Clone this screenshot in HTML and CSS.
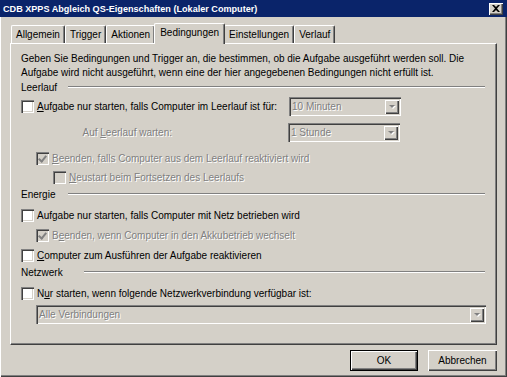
FILE: index.html
```html
<!DOCTYPE html>
<html lang="de">
<head>
  <meta charset="UTF-8">
  <title>CDB XPPS Abgleich QS-Eigenschaften</title>
  <link rel="stylesheet" href="styles.css">
</head>
<body>
  <div class="window">
    <div class="titlebar">
      <span class="title">CDB XPPS Abgleich QS-Eigenschaften (Lokaler Computer)</span>
      <span class="close">
        <svg width="8" height="7" viewBox="0 0 8 7"><path d="M0 0h2l2 2 2-2h2L5 3.5 8 7H6L4 5 2 7H0l3-3.5z" fill="#000"/></svg>
      </span>
    </div>

    <div class="content">
      <div class="tabs">
        <div class="tab">Allgemein</div>
        <div class="tab">Trigger</div>
        <div class="tab">Aktionen</div>
        <div class="tab active">Bedingungen</div>
        <div class="tab">Einstellungen</div>
        <div class="tab">Verlauf</div>
      </div>

      <div class="panel">
        <p class="desc">Geben Sie Bedingungen und Trigger an, die bestimmen, ob die Aufgabe ausgeführt werden soll. Die Aufgabe wird nicht ausgeführt, wenn eine der hier angegebenen Bedingungen nicht erfüllt ist.</p>

        <div class="group g-idle"><span class="group-label">Leerlauf</span><span class="etch"></span></div>

        <div class="row r-idle">
          <span class="check"></span>
          <span class="label wide"><u>A</u>ufgabe nur starten, falls Computer im Leerlauf ist für:</span>
          <span class="combo small"><span class="combo-text">10 Minuten</span><span class="drop"><i class="arrow"></i></span></span>
        </div>

        <div class="row r-wait">
          <span class="label right disabled">Auf <u>L</u>eerlauf warten:</span>
          <span class="combo small"><span class="combo-text">1 Stunde</span><span class="drop"><i class="arrow"></i></span></span>
        </div>

        <div class="row r-stop indent1">
          <span class="check checked off"></span>
          <span class="label disabled"><u>B</u>eenden, falls Computer aus dem Leerlauf reaktiviert wird</span>
        </div>

        <div class="row r-restart indent2">
          <span class="check off"></span>
          <span class="label disabled"><u>N</u>eustart beim Fortsetzen des Leerlaufs</span>
        </div>

        <div class="group g-power"><span class="group-label">Energie</span><span class="etch"></span></div>

        <div class="row r-ac">
          <span class="check"></span>
          <span class="label">Auf<u>g</u>abe nur starten, falls Computer mit Netz betrieben wird</span>
        </div>

        <div class="row r-battery indent1">
          <span class="check checked off"></span>
          <span class="label disabled">B<u>e</u>enden, wenn Computer in den Akkubetrieb wechselt</span>
        </div>

        <div class="row r-wake">
          <span class="check"></span>
          <span class="label"><u>C</u>omputer zum Ausführen der Aufgabe reaktivieren</span>
        </div>

        <div class="group g-net"><span class="group-label">Netzwerk</span><span class="etch"></span></div>

        <div class="row r-net">
          <span class="check"></span>
          <span class="label">N<u>u</u>r starten, wenn folgende Netzwerkverbindung verfügbar ist:</span>
        </div>

        <div class="row r-conn indent1">
          <span class="combo full"><span class="combo-text">Alle Verbindungen</span><span class="drop"><i class="arrow"></i></span></span>
        </div>
      </div>

      <div class="buttons">
        <button class="btn default">OK</button>
        <button class="btn">Abbrechen</button>
      </div>
    </div>
  </div>
</body>
</html>
```

FILE: styles.css
```css
* {
  box-sizing: border-box;
}

body {
  margin: 0;
  width: 507px;
  height: 377px;
  overflow: hidden;
  font-family: "Liberation Sans", Arial, sans-serif;
  font-size: 10px;
  color: #000;
  background: #d4d0c8;
}

.window {
  width: 507px;
  height: 377px;
  background: #d4d0c8;
  box-shadow: inset 1px 0 0 #ffffff, inset -1px -1px 0 #404040, inset -2px -2px 0 #808080;
}

.titlebar {
  height: 17px;
  background: #0a246a;
  display: flex;
  align-items: center;
  justify-content: space-between;
  padding: 0 4px 0 3px;
}

.title {
  color: #fff;
  font-weight: bold;
  font-size: 9.1px;
}

.close {
  width: 14px;
  height: 12px;
  background: #d4d0c8;
  display: flex;
  align-items: center;
  justify-content: center;
  box-shadow: inset 1px 1px 0 #ffffff, inset -1px -1px 0 #404040, inset -2px -2px 0 #808080;
}

.content {
  padding: 6px 10px 0 10px;
}

/* tabs */
.tabs {
  display: flex;
  align-items: flex-end;
  height: 20px;
  padding-left: 1px;
}

.tab {
  height: 18px;
  padding: 0 4px;
  line-height: 17px;
  border-left: 1px solid #fff;
  border-top: 1px solid #fff;
  border-right: 1px solid #404040;
  box-shadow: inset -1px 0 0 #808080;
  border-radius: 2px 2px 0 0;
  position: relative;
}

.tab.active {
  height: 21px;
  margin: 0 -1px -1px -1px;
  padding: 0 5px;
  line-height: 18px;
  background: #d4d0c8;
  z-index: 1;
}

/* panel */
.panel {
  height: 302px;
  padding: 8px 10px 0 10px;
  border-left: 1px solid #fff;
  border-top: 1px solid #fff;
  border-right: 1px solid #404040;
  border-bottom: 1px solid #404040;
  box-shadow: inset -1px -1px 0 #808080;
}

.desc {
  margin: 0;
  line-height: 14px;
  width: 462px;
}

.group {
  display: flex;
  align-items: center;
  height: 14px;
}

.group-label {
  flex: 0 0 47px;
}

.g-net .group-label {
  flex-basis: 63px;
}

.etch {
  flex: 1;
  height: 2px;
  border-top: 1px solid #808080;
  border-bottom: 1px solid #fff;
  margin-right: 1px;
}

.g-idle { margin-top: 0; }
.g-power { margin-top: 2px; }
.g-net { margin-top: 2px; }

.row {
  display: flex;
  align-items: center;
  height: 16px;
}

.r-idle { height: 19px; margin-top: 3px; }
.r-wait { height: 19px; margin-top: 7px; }
.r-stop { margin-top: 8px; }
.r-restart { margin-top: 3px; }
.r-ac { margin-top: 6px; }
.r-battery { margin-top: 4px; }
.r-wake { margin-top: 4px; }
.r-net { margin-top: 6px; }
.r-conn { height: 19px; margin-top: 4px; }

.indent1 { padding-left: 15px; }
.indent2 { padding-left: 32px; }

.check {
  flex: 0 0 13px;
  width: 13px;
  height: 13px;
  background: #fff;
  box-shadow: inset 1px 1px 0 #808080, inset 2px 2px 0 #404040, inset -1px -1px 0 #fff, inset -2px -2px 0 #d4d0c8;
  margin-right: 3px;
  position: relative;
}

.check.off {
  background: #d4d0c8;
}

.check.checked::after {
  content: "";
  position: absolute;
  left: 4px;
  top: 2px;
  width: 3px;
  height: 6px;
  border-right: 2px solid #808080;
  border-bottom: 2px solid #808080;
  transform: rotate(40deg);
}

.label {
  white-space: nowrap;
}

.label.wide {
  width: 252px;
}

.label.right {
  width: 151px;
  margin-right: 116px;
  text-align: right;
}

.disabled {
  color: #808080;
  text-shadow: 1px 1px 0 #fff;
}

.combo {
  display: flex;
  height: 19px;
  background: #d4d0c8;
  box-shadow: inset 1px 1px 0 #808080, inset 2px 2px 0 #404040, inset -1px -1px 0 #fff, inset -2px -2px 0 #d4d0c8;
  padding: 2px;
  color: #808080;
  text-shadow: 1px 1px 0 #fff;
}

.combo.small {
  width: 112px;
}

.combo.full {
  width: 450px;
}

.combo-text {
  flex: 1;
  line-height: 15px;
  padding-left: 1px;
}

.drop {
  width: 15px;
  height: 15px;
  box-shadow: inset 1px 1px 0 #d4d0c8, inset 2px 2px 0 #fff, inset -1px -1px 0 #404040, inset -2px -2px 0 #808080;
  display: flex;
  align-items: center;
  justify-content: center;
}

.arrow {
  width: 0;
  height: 0;
  border-left: 3px solid transparent;
  border-right: 3px solid transparent;
  border-top: 3px solid #808080;
  filter: drop-shadow(1px 1px 0 #fff);
}

/* buttons */
.buttons {
  display: flex;
  justify-content: flex-end;
  gap: 10px;
  margin-top: 5px;
}

.btn {
  width: 69px;
  height: 21px;
  font-family: inherit;
  font-size: 10px;
  background: #d4d0c8;
  border: none;
  padding: 0;
  box-shadow: inset 1px 1px 0 #fff, inset -1px -1px 0 #404040, inset -2px -2px 0 #808080;
}

.btn.default {
  width: 68px;
  border: 1px solid #000;
}
```
